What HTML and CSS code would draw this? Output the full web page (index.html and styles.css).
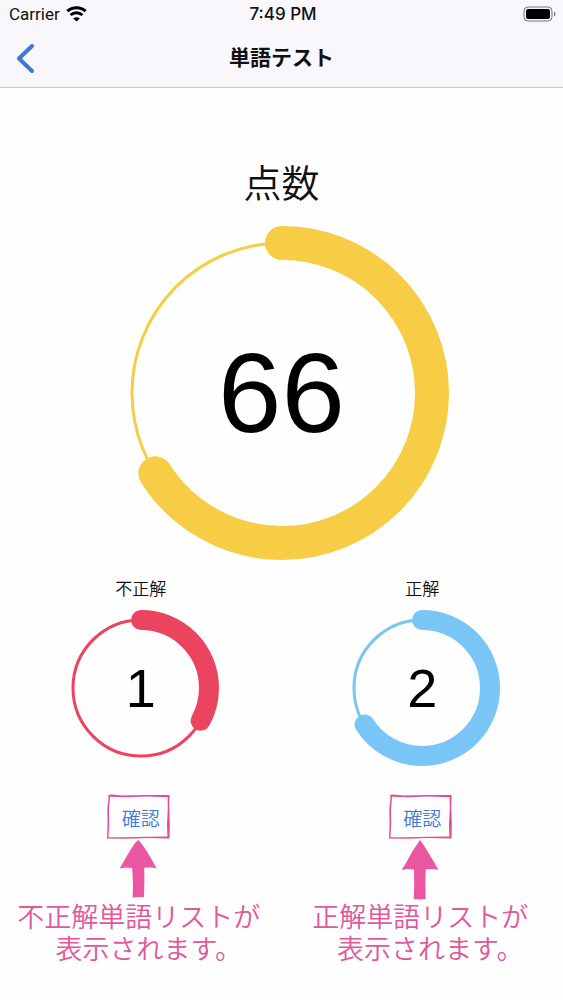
FILE: index.html
```
<!DOCTYPE html>
<html lang="ja">
<head>
    <meta charset="UTF-8">
    <meta name="viewport" content="width=device-width, initial-scale=1.0">
    <title>単語テスト</title>
    <link rel="stylesheet" href="styles.css">
</head>
<body>
    <header class="header">
        <div class="status">
            <div class="carrier">
                <span>Carrier</span>
                <svg class="wifi" viewBox="0 0 21 16" aria-hidden="true">
                    <path d="M1.3 5.2C6.4.6 14.6.6 19.7 5.2" />
                    <path d="M4.6 9C8 6 13 6 16.4 9" />
                    <path class="wifi-dot" d="M10.5 15.6L7.2 12.4C9.1 10.8 11.9 10.8 13.8 12.4Z" />
                </svg>
            </div>
            <span class="time">7:49 PM</span>
            <svg class="battery" viewBox="0 0 34 16" aria-hidden="true">
                <rect class="battery-case" x="1" y="1" width="28" height="14" rx="4" />
                <rect x="3" y="3" width="24" height="10" rx="2" />
                <path class="battery-tip" d="M31 5.5C33 6.5 33 9.5 31 10.5Z" />
            </svg>
        </div>
        <nav class="nav">
            <a class="back" href="#" aria-label="戻る">
                <svg viewBox="0 0 18 30" aria-hidden="true">
                    <path d="M16 3L3 15.5L16 28" />
                </svg>
            </a>
            <h1 class="title">単語テスト</h1>
        </nav>
    </header>

    <main class="main">
        <h2 class="score-label">点数</h2>
        <div class="ring ring-score">
            <svg viewBox="0 0 334 334" aria-hidden="true">
                <circle class="track" cx="167" cy="167" r="150" />
                <circle class="bar" cx="167" cy="167" r="150" pathLength="100" stroke-dasharray="66 100" transform="rotate(-90 167 167)" />
            </svg>
            <span class="number">66</span>
        </div>

        <div class="results">
            <section class="result">
                <h3 class="result-label">不正解</h3>
                <div class="ring ring-small ring-wrong">
                    <svg viewBox="0 0 156 156" aria-hidden="true">
                        <circle class="track" cx="78" cy="78" r="68" />
                        <circle class="bar" cx="78" cy="78" r="68" pathLength="100" stroke-dasharray="33 100" transform="rotate(-90 78 78)" />
                    </svg>
                    <span class="number">1</span>
                </div>
                <button type="button" class="check">
                    <svg class="frame" viewBox="0 0 68 46" aria-hidden="true">
                        <path d="M1 1L5 .6L15 1.4L40 1L62.6 1L62.2 12L62.8 30L62.5 44.4L40 44L20 44.8L0 44.6L.6 30L.3 15L1.6 3ZM3 2.8L2 15L2.2 30L1.4 43.2L20 43.2L40 42.8L60.4 42.4L60 30L60.8 15L60.6 3.2L40 2.6L20 3.2Z" />
                    </svg>
                    確認
                </button>
                <svg class="arrow" viewBox="0 0 68 60" aria-hidden="true">
                    <path d="M31.4 0L34 3L39 10L45 20L49.6 28.4L45 27.6L37.2 27.8L37.4 40L37 57L30 57.2L25.6 57.4L26 45L25.2 28L19 27.6L12.6 28.6L17 21L23.4 10L28 3Z" />
                </svg>
                <p class="note">不正解単語リストが<span class="note-end">表示されます。</span></p>
            </section>

            <section class="result">
                <h3 class="result-label">正解</h3>
                <div class="ring ring-small ring-right">
                    <svg viewBox="0 0 156 156" aria-hidden="true">
                        <circle class="track" cx="78" cy="78" r="68" />
                        <circle class="bar" cx="78" cy="78" r="68" pathLength="100" stroke-dasharray="66 100" transform="rotate(-90 78 78)" />
                    </svg>
                    <span class="number">2</span>
                </div>
                <button type="button" class="check">
                    <svg class="frame" viewBox="0 0 68 46" aria-hidden="true">
                        <path d="M2 1L5 .6L15 1.4L40 1L63.6 1L63.2 12L63.8 30L63.5 44.4L40 44L20 44.8L1 44.6L1.6 30L1.3 15L2.6 3ZM4 2.8L3 15L3.2 30L2.4 43.2L20 43.2L40 42.8L61.4 42.4L61 30L61.8 15L61.6 3.2L40 2.6L20 3.2Z" />
                    </svg>
                    確認
                </button>
                <svg class="arrow" viewBox="0 0 68 60" aria-hidden="true">
                    <path d="M32 0L35 4L40 12L46 22L50.4 30L45 29L37.8 29.2L37.4 42L37.6 59L32 59.4L25.8 59L26.2 45L26 29.4L19 29L13.6 30L18 23L24 12L28.6 5Z" />
                </svg>
                <p class="note">正解単語リストが<span class="note-end">表示されます。</span></p>
            </section>
        </div>
    </main>
</body>
</html>
```
FILE: styles.css
```
* {
    box-sizing: border-box;
}

body {
    margin: 0;
    background-color: #fefefe;
    color: #111;
    font-family: "Liberation Sans", "Noto Sans CJK JP", sans-serif;
}

h1, h2, h3, p {
    margin: 0;
}

svg {
    display: block;
}

.header {
    height: 88px;
    background-color: #f8f7fb;
    border-bottom: 1px solid #c9c8cc;
}

.status {
    display: grid;
    grid-template-columns: 1fr auto 1fr;
    align-items: center;
    height: 28px;
    padding: 0 6px 0 9px;
    font-family: Inter, sans-serif;
    font-size: 17px;
}

.carrier {
    display: flex;
    align-items: center;
    gap: 6px;
    font-family: Roboto, sans-serif;
}

.wifi {
    width: 21px;
    height: 16px;
    fill: none;
    stroke: #000;
    stroke-width: 3;
}

.wifi-dot {
    fill: #000;
    stroke: none;
}

.time {
    font-weight: 500;
}

.battery {
    width: 34px;
    height: 16px;
    justify-self: end;
}

.battery-case {
    fill: none;
    stroke: #777;
}

.battery-tip {
    fill: #777;
}

.nav {
    display: grid;
    grid-template-columns: 1fr auto 1fr;
    align-items: center;
    height: 60px;
    padding: 0 16px;
}

.back {
    width: 18px;
}

.back svg {
    width: 18px;
    height: 30px;
    fill: none;
    stroke: #3f78d6;
    stroke-width: 4;
    stroke-linecap: round;
    stroke-linejoin: round;
}

.title {
    font-size: 21px;
    line-height: 32px;
    font-weight: bold;
}

.main {
    padding-top: 72px;
}

.score-label {
    font-size: 38px;
    line-height: 48px;
    font-weight: 350;
    text-align: center;
}

.ring {
    display: grid;
    place-items: center;
    margin: 0 auto;
}

.ring svg,
.ring .number {
    grid-area: 1 / 1;
}

.ring svg {
    width: 100%;
    fill: none;
    stroke: currentColor;
}

.track {
    stroke-width: 3;
}

.bar {
    stroke-linecap: round;
}

.number {
    color: #000;
}

.ring-score {
    width: 334px;
    margin-top: 18px;
    color: #f6cd45;
    font-size: 114px;
    line-height: 120px;
}

.ring-score .bar {
    stroke-width: 34;
}

.ring-small {
    width: 156px;
    margin-top: 8px;
    font-size: 54px;
    line-height: 60px;
}

.ring-small .bar {
    stroke-width: 20;
}

.ring-wrong {
    color: #eb445e;
}

.ring-right {
    color: #79c5f6;
}

.results {
    display: grid;
    grid-template-columns: 1fr 1fr;
    margin-top: 18px;
}

.result {
    display: flex;
    flex-direction: column;
    align-items: center;
}

.result-label {
    font-size: 17px;
    line-height: 24px;
    font-weight: 350;
}

.check {
    position: relative;
    width: 68px;
    height: 46px;
    margin-top: 28px;
    padding: 0;
    border: none;
    background: none;
    color: #3f7ad8;
    font-family: inherit;
    font-size: 19px;
    font-weight: 350;
    cursor: pointer;
}

/* hand-drawn frame around the button */
.frame {
    position: absolute;
    inset: 0;
    fill: #df4d93;
    fill-rule: evenodd;
}

.arrow {
    width: 68px;
    height: 60px;
    fill: #ea56a0;
}

.note {
    margin-top: 2px;
    padding-right: 4px;
    color: #e2569a;
    font-size: 27px;
    line-height: 32px;
    font-weight: 350;
    text-align: center;
}

.note-end {
    display: block;
    padding-left: 20px;
}
```
